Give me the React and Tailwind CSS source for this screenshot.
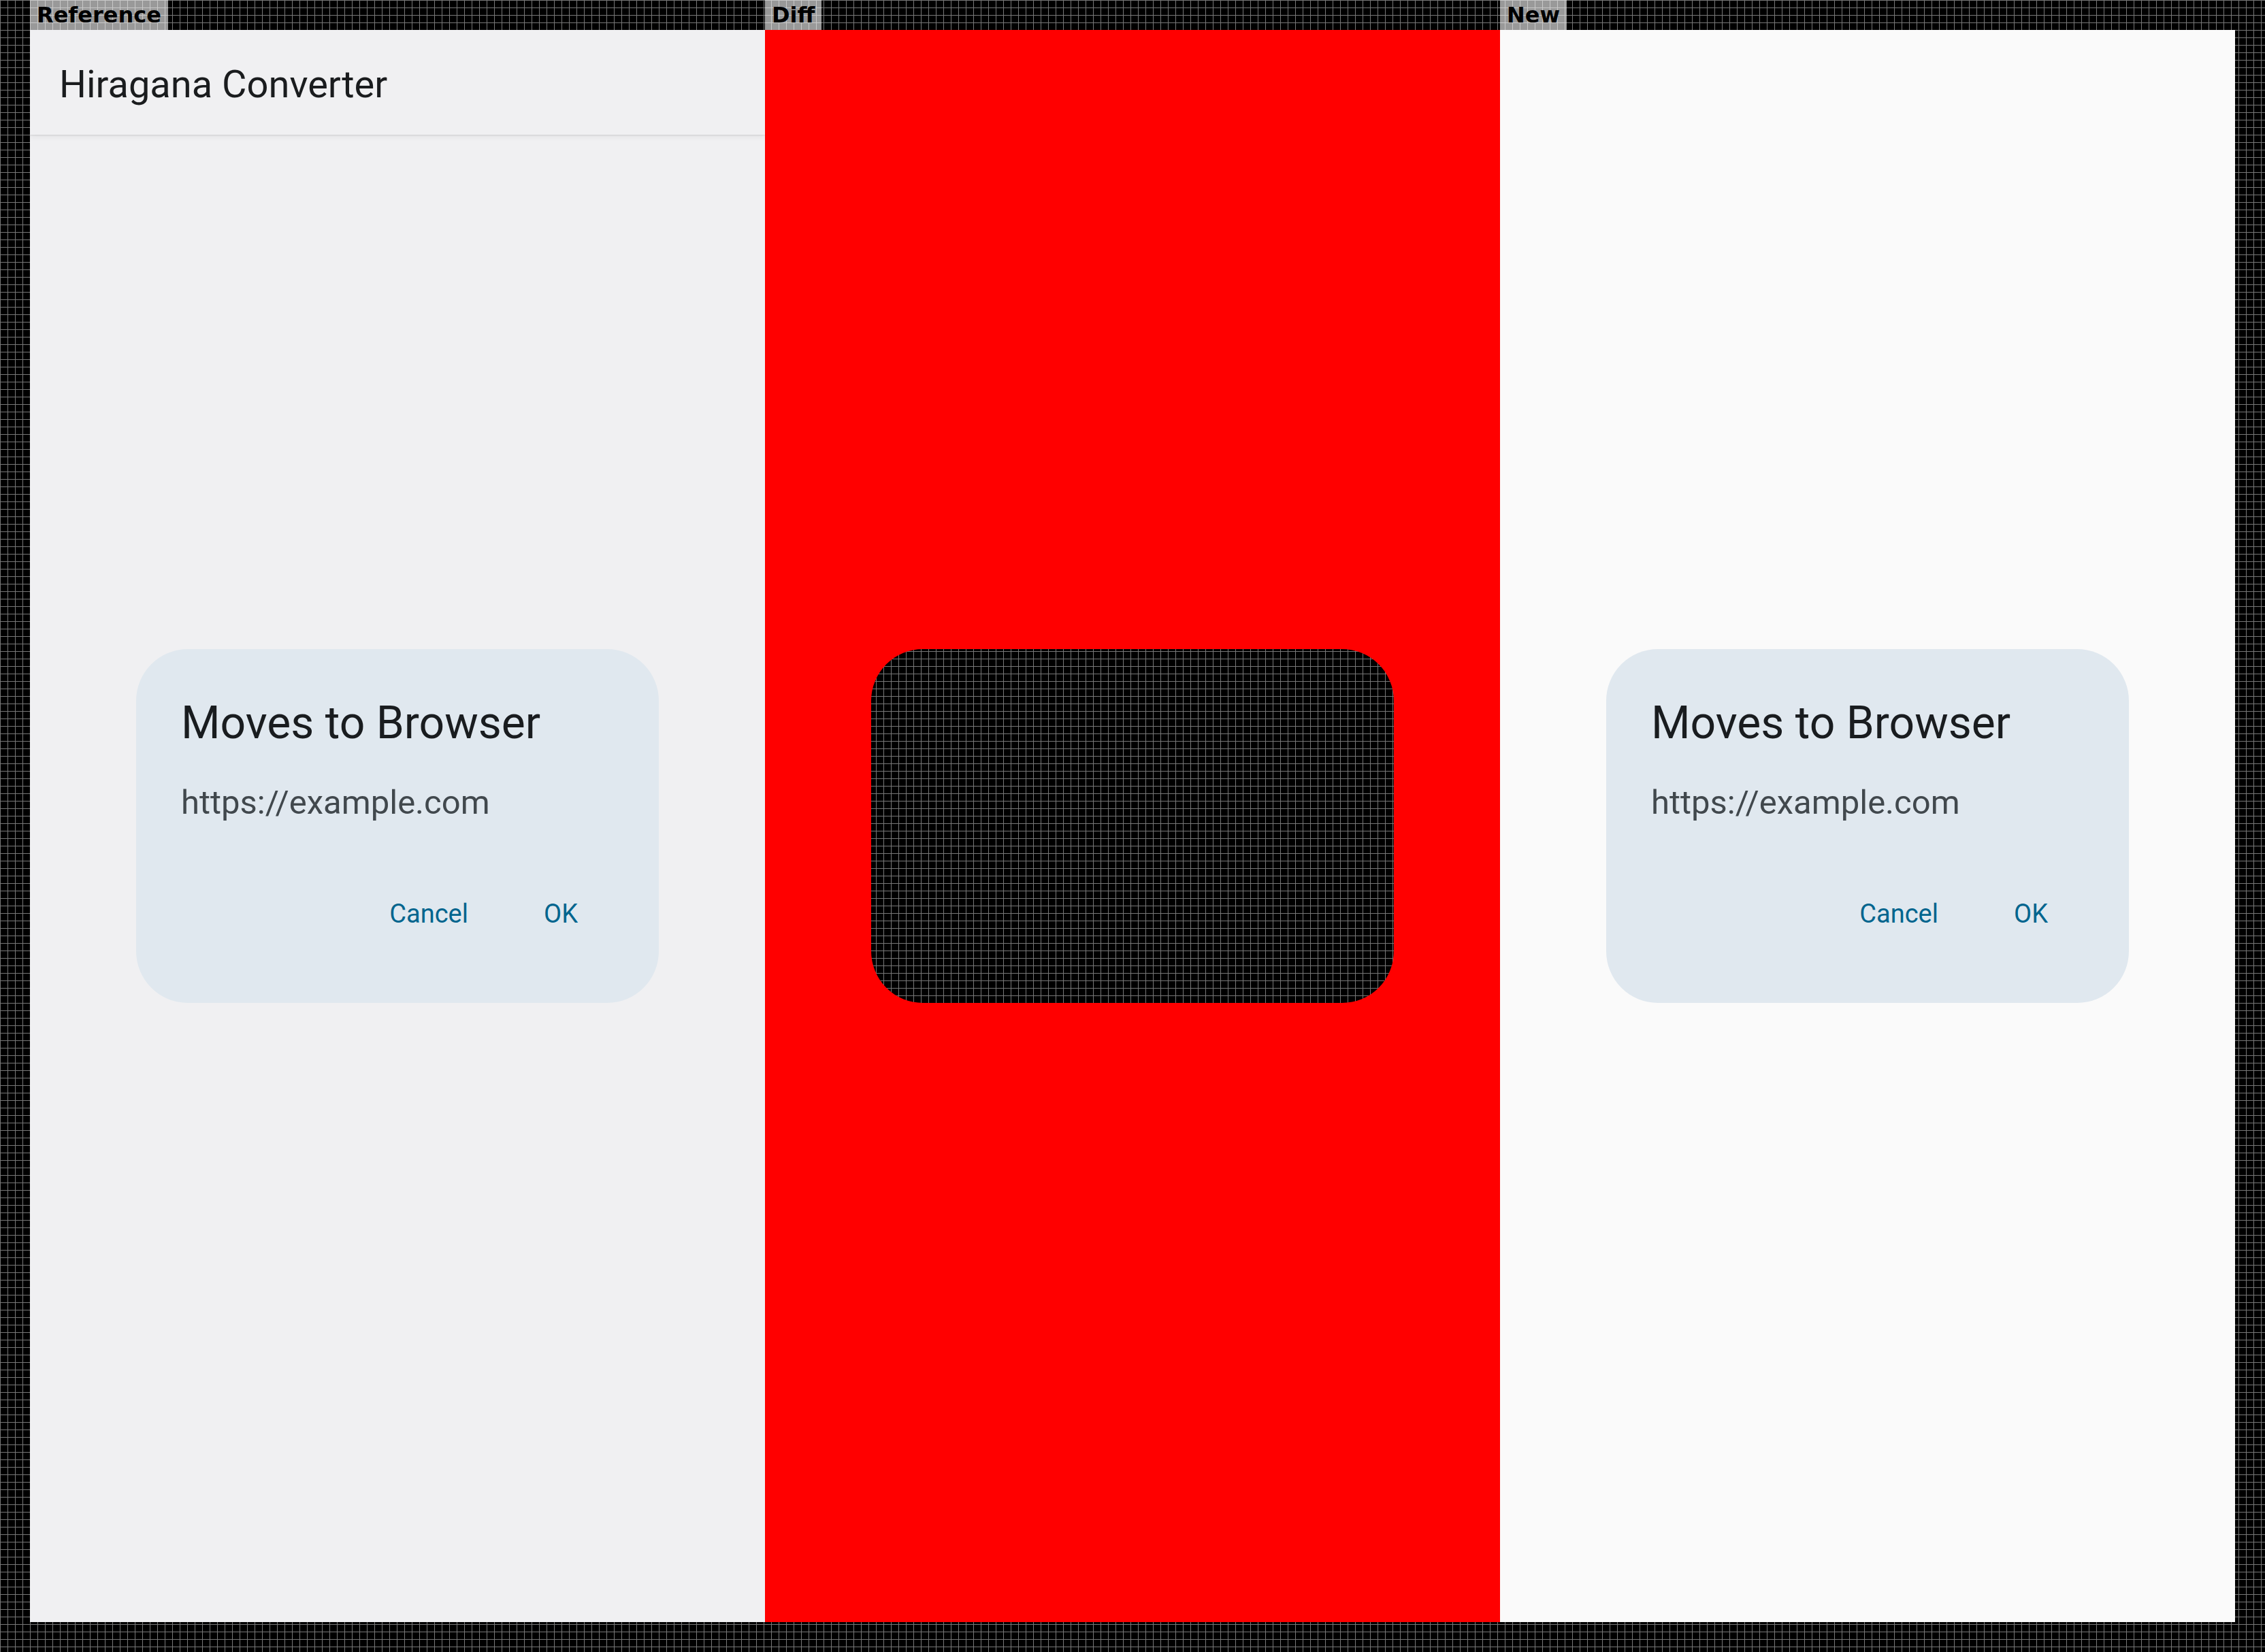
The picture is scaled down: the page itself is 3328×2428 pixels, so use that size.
import React from "react";

function Dialog() {
  return (
    <div className="w-[768px] h-[520px] rounded-[76px] bg-[#e0e8ef] flex flex-col px-[66px] pt-[65px] font-['Roboto',sans-serif]">
      <div className="text-[66px] leading-[88px] text-[#191c1f] whitespace-nowrap">Moves to Browser</div>
      <div className="mt-[40px] text-[49px] leading-[66px] text-[#41484d] whitespace-nowrap">https://example.com</div>
      <div className="mt-[75px] flex justify-end gap-[45px] pr-[20px]">
        <div className="h-[110px] px-[33px] flex items-center text-[38px] leading-[40px] text-[#00658e]">Cancel</div>
        <div className="h-[110px] px-[33px] flex items-center text-[38px] leading-[40px] text-[#00658e]">OK</div>
      </div>
    </div>
  );
}

function Label({ children }) {
  return (
    <div className="w-[1080px] h-[44px] flex">
      <div className="h-[44px] px-[10px] bg-white/60 text-black font-bold text-[32px] leading-[44px] font-['DejaVu_Sans',sans-serif] whitespace-nowrap">
        {children}
      </div>
    </div>
  );
}

export default function App() {
  return (
    <div className="w-[3328px] h-[2428px] bg-black bg-[image:linear-gradient(to_right,#777_1px,transparent_1px),linear-gradient(to_bottom,#777_1px,transparent_1px)] bg-[size:11px_11px] px-[44px] flex flex-col overflow-hidden">
      <div className="flex h-[44px]">
        <Label>Reference</Label>
        <Label>Diff</Label>
        <Label>New</Label>
      </div>
      <div className="flex h-[2340px]">
        {/* Reference */}
        <div className="w-[1080px] h-[2340px] bg-[#f0f0f2] grid grid-cols-1 grid-rows-1 overflow-hidden">
          <div className="col-start-1 row-start-1 flex items-center justify-center">
            <Dialog />
          </div>
          <div className="col-start-1 row-start-1 self-start relative z-10 h-[154px] bg-[#f0f0f2] shadow-[0_1px_2px_rgba(0,0,0,0.10),0_3px_9px_rgba(0,0,0,0.06)] flex items-center pl-[43px] pt-[6px]">
            <span className="text-[56px] leading-[56px] text-[#1a1c1e] font-['Roboto',sans-serif] whitespace-nowrap">Hiragana Converter</span>
          </div>
        </div>
        {/* Diff */}
        <div className="w-[1080px] h-[2340px] overflow-hidden flex items-center justify-center">
          <div className="w-[768px] h-[520px] rounded-[76px] shadow-[0_0_0_2000px_#ff0000]" />
        </div>
        {/* New */}
        <div className="w-[1080px] h-[2340px] bg-[#fafafa] flex items-center justify-center overflow-hidden">
          <Dialog />
        </div>
      </div>
    </div>
  );
}
